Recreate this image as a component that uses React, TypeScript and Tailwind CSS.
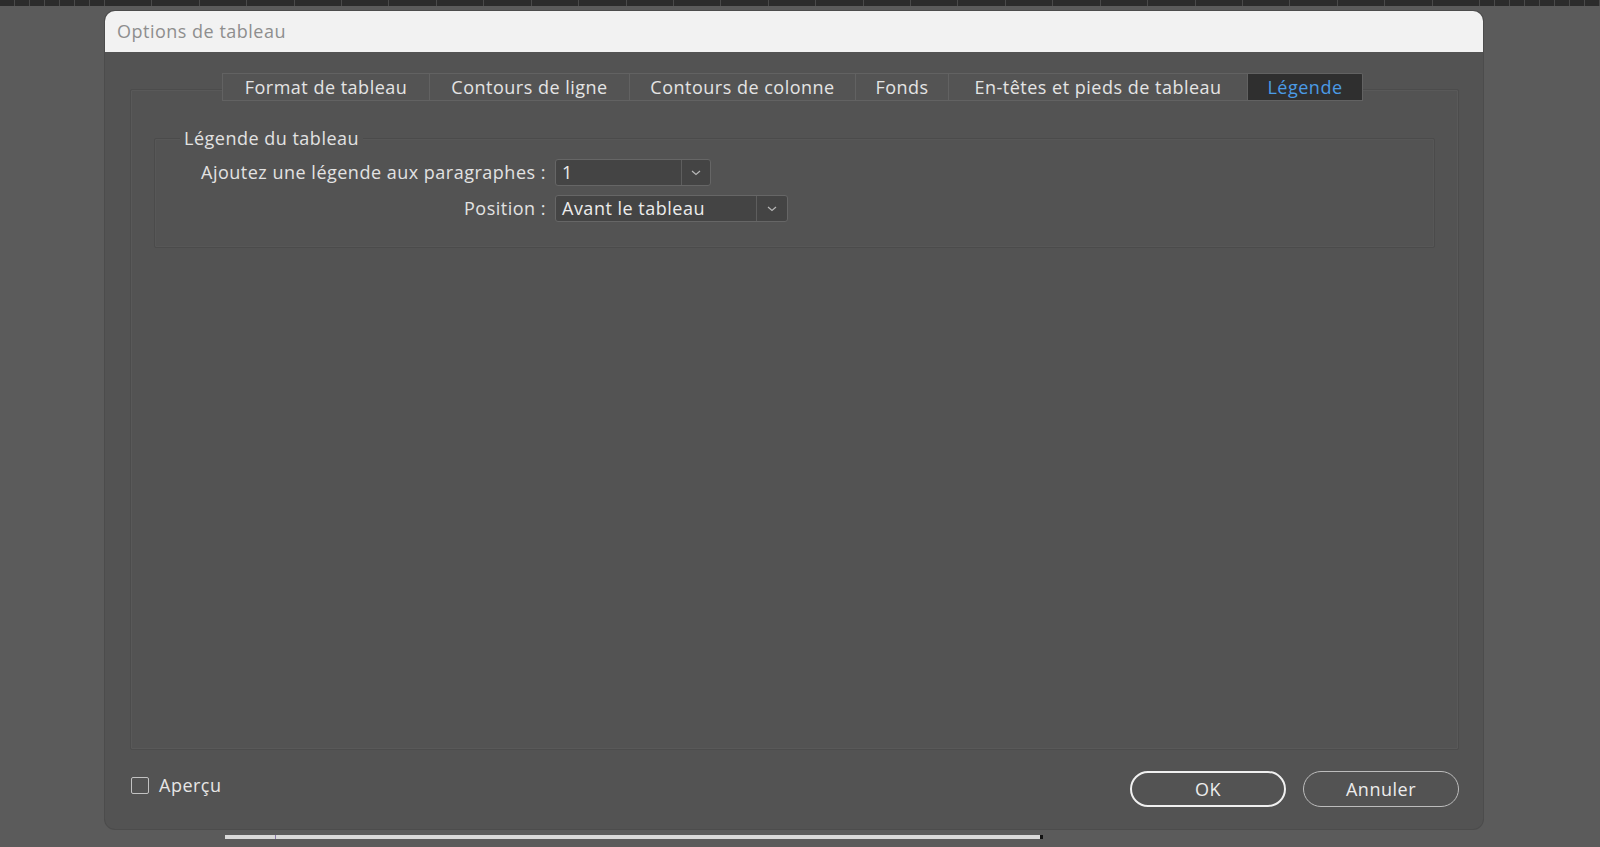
import React from 'react';

const tabs = [
  { label: 'Format de tableau', width: 'w-[208px]' },
  { label: 'Contours de ligne', width: 'w-[200px]' },
  { label: 'Contours de colonne', width: 'w-[226px]' },
  { label: 'Fonds', width: 'w-[93px]' },
  { label: 'En-têtes et pieds de tableau', width: 'w-[299px]' },
  { label: 'Légende', width: 'w-[115px]', active: true },
];

// règle du haut : graduations fines aux bords, larges au milieu
const Ruler: React.FC = () => (
  <div className="h-[6px] shrink-0 flex bg-[#2c2c2c]">
    {Array.from({ length: 7 }).map((_, i) => (
      <div key={`a${i}`} className="w-[15px] h-full border-r border-[#4a4a4a]" />
    ))}
    {Array.from({ length: 29 }).map((_, i) => (
      <div key={`b${i}`} className="w-[47.5px] h-full border-r border-[#4a4a4a]" />
    ))}
    {Array.from({ length: 8 }).map((_, i) => (
      <div key={`c${i}`} className="w-[15px] h-full border-r border-[#4a4a4a]" />
    ))}
  </div>
);

const Chevron: React.FC = () => (
  <svg width="10" height="6" viewBox="0 0 10 6" fill="none">
    <path d="M1 1l4 3.5L9 1" stroke="#b8b8b8" strokeWidth="1.2" />
  </svg>
);

interface SelectProps {
  value: string;
  width: string;
  arrow: string;
}

const Select: React.FC<SelectProps> = ({ value, width, arrow }) => (
  <div className={`${width} h-[27px] flex rounded-[3px] border border-[#666666] bg-[#444444]`}>
    <div className="flex-1 flex items-center pl-[6px] text-[#ececec]">{value}</div>
    <div className={`${arrow} flex items-center justify-center border-l border-[#5e5e5e]`}>
      <Chevron />
    </div>
  </div>
);

export default function App() {
  return (
    <div
      className="w-[1600px] h-[847px] overflow-hidden flex flex-col bg-[#5b5b5b] text-[#e2e2e2] text-[18px] tracking-[0.5px]"
      style={{ fontFamily: '"Open Sans", "DejaVu Sans", sans-serif' }}
    >
      <Ruler />

      {/* fenêtre de dialogue */}
      <div className="ml-[105px] mt-[5px] w-[1378px] h-[818px] shrink-0 flex flex-col rounded-[10px] bg-[#535353] shadow-[0_0_0_1px_#4c4c4c]">
        <div className="h-[41px] shrink-0 flex items-center pl-[12px] rounded-t-[10px] bg-[#f2f2f2] text-[#8e8e8e]">
          Options de tableau
        </div>

        <div className="flex-1 flex flex-col pl-[25px] pr-[24px]">
          {/* onglets */}
          <div className="mt-[21px] ml-[92px] h-[28px] flex relative z-10">
            {tabs.map((tab) => (
              <div
                key={tab.label}
                className={`${tab.width} h-full flex items-center justify-center border-y border-r border-[#626262] first:border-l ${
                  tab.active ? 'bg-[#2f2f2f] text-[#4b9be6] rounded-tr-[2px]' : 'bg-[#545454] text-[#e4e4e4]'
                }`}
              >
                {tab.label}
              </div>
            ))}
          </div>

          {/* panneau de l'onglet */}
          <div className="-mt-[12px] h-[661px] shrink-0 flex flex-col rounded-[2px] border border-[#4c4c4c] shadow-[inset_0_0_0_1px_#595959]">
            <div className="mx-[23px] mt-[48px] h-[110px] relative rounded-[2px] border border-[#4b4b4b] shadow-[inset_0_0_0_1px_#575757]">
              <span className="absolute left-[25px] -top-[14px] px-[4px] bg-[#535353] text-[#e2e2e2]">
                Légende du tableau
              </span>
              <div className="mt-[20px] pl-[45px] grid grid-cols-[346px_auto] gap-x-[9px] gap-y-[9px] items-center">
                <div className="text-right">Ajoutez une légende aux paragraphes :</div>
                <Select value="1" width="w-[156px]" arrow="w-[29px]" />
                <div className="text-right">Position :</div>
                <Select value="Avant le tableau" width="w-[233px]" arrow="w-[31px]" />
              </div>
            </div>
          </div>

          {/* pied du dialogue */}
          <div className="mt-[21px] flex items-start">
            <label className="h-[28px] ml-[1px] flex items-center gap-[10px] text-[#e6e6e6]">
              <span className="w-[18px] h-[17px] rounded-[2px] border-[1.5px] border-[#c2c2c2]" />
              Aperçu
            </label>
            <div className="ml-auto flex gap-[17px]">
              <button className="w-[156px] h-[36px] rounded-full border-2 border-[#f0f0f0] text-[#ececec] tracking-[0.5px]">
                OK
              </button>
              <button className="w-[156px] h-[36px] rounded-full border-[1.5px] border-[#bcbcbc] text-[#ececec] tracking-[0.5px]">
                Annuler
              </button>
            </div>
          </div>
        </div>
      </div>

      {/* barre de défilement de la page en dessous */}
      <div className="mt-[6px] ml-[225px] w-[818px] h-[4px] shrink-0 flex bg-[#d9d9d9]">
        <div className="ml-[50px] w-px h-full bg-[#8a7aa8]" />
        <div className="ml-auto w-[3px] h-full bg-[#111111]" />
      </div>
    </div>
  );
}
